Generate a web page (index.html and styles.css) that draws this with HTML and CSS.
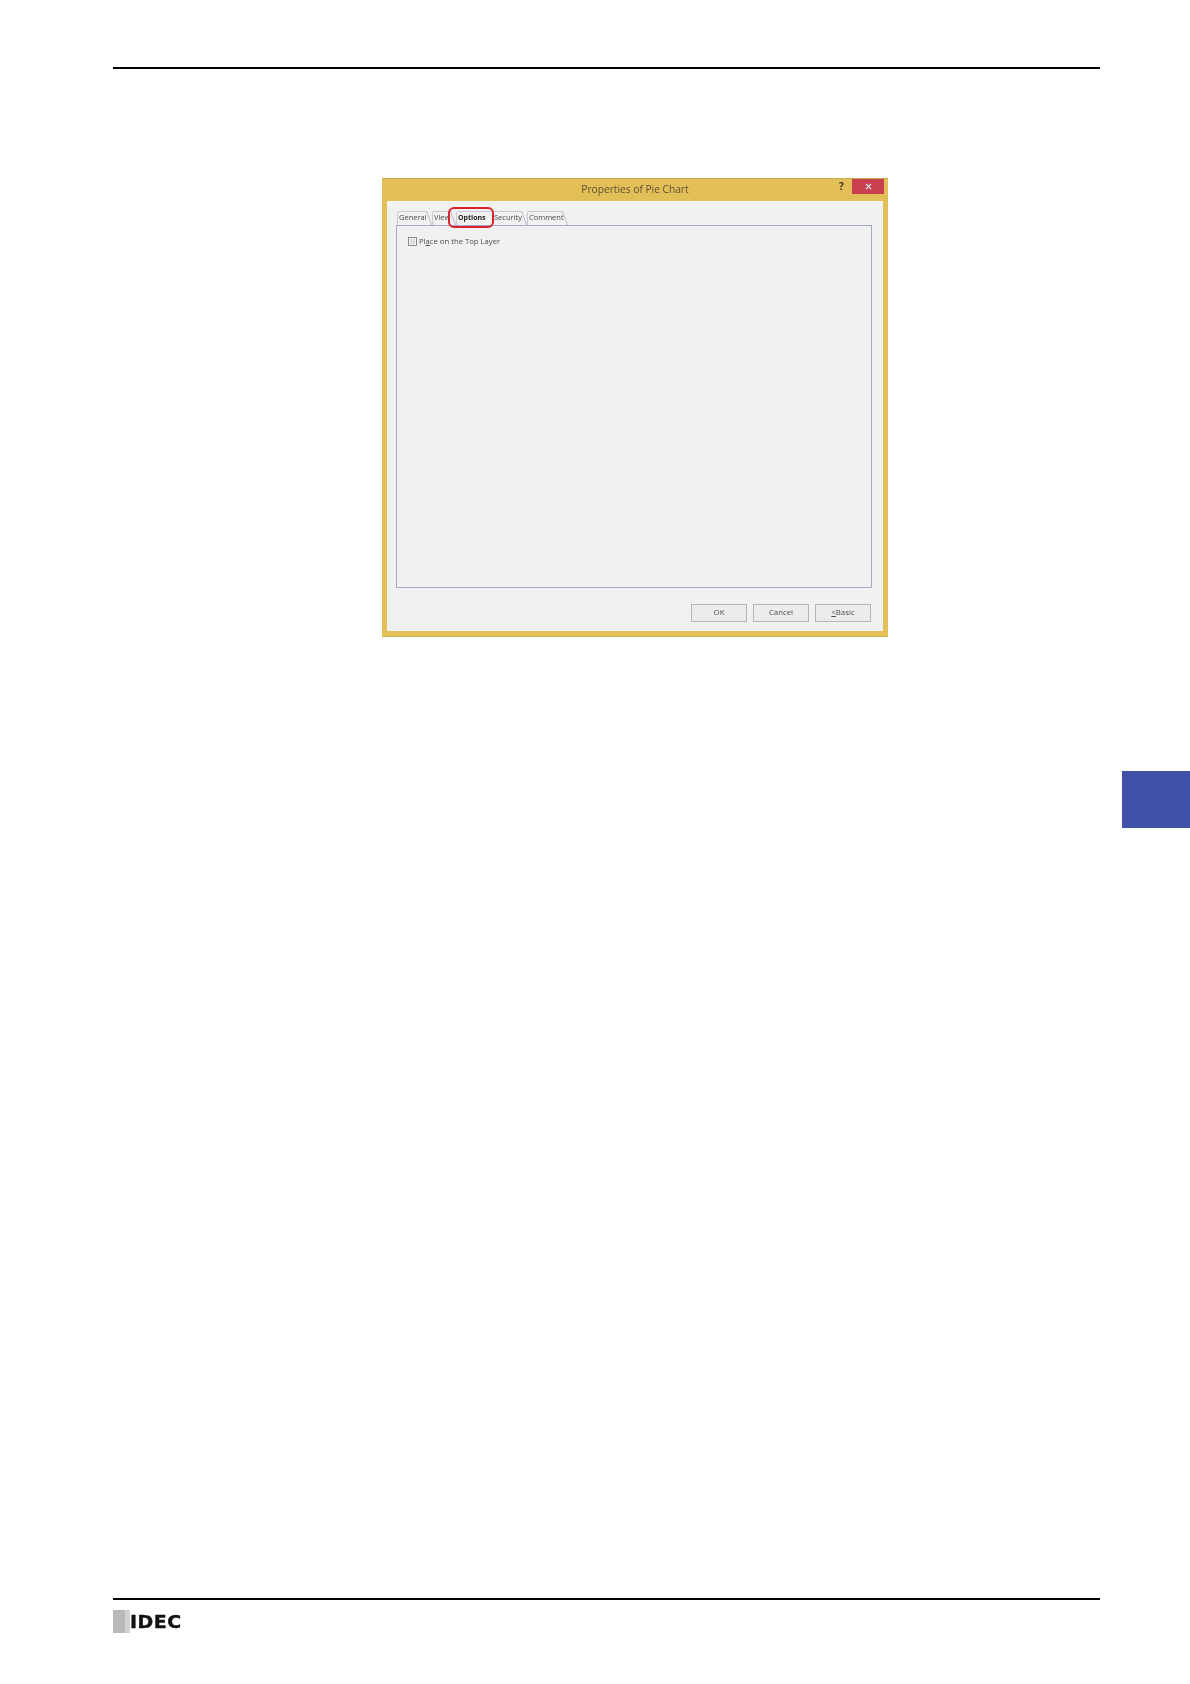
FILE: index.html
```html
<!DOCTYPE html>
<html lang="en">
<head>
<meta charset="utf-8">
<title>Properties of Pie Chart</title>
<link rel="stylesheet" href="styles.css">
</head>
<body>
<div class="page">
  <header class="top-rule"></header>
  <main class="content">
    <section class="dialog">
      <div class="titlebar">
        <span class="title">Properties of Pie Chart</span>
        <span class="help">?</span>
        <span class="close">
          <svg width="7" height="7" viewBox="0 0 8 8"><path d="M1 1L7 7M7 1L1 7" stroke="#fff" stroke-width="1.2" fill="none"/></svg>
        </span>
      </div>
      <div class="client">
        <div class="tabs">
          <span class="tab tab-general">General</span>
          <span class="tab tab-view">View</span>
          <span class="tab tab-options">Options<i class="highlight"></i></span>
          <span class="tab tab-security">Security</span>
          <span class="tab tab-comment">Comment</span>
        </div>
        <div class="panel">
          <label class="check"><span class="box"></span><span>Pl<u>a</u>ce on the Top Layer</span></label>
        </div>
        <div class="buttons">
          <span class="btn">OK</span>
          <span class="btn">Cancel</span>
          <span class="btn"><u>&lt;</u> Basic</span>
        </div>
      </div>
    </section>
  </main>
  <aside class="side-tab"></aside>
  <footer class="footer">
    <div class="logo"><span class="logo-mark"></span><span class="logo-text">IDEC</span></div>
  </footer>
</div>
</body>
</html>
```
FILE: styles.css
```css
* { box-sizing: border-box; }
html, body { margin: 0; padding: 0; background: #fff; }
.page {
  position: relative;
  width: 1190px;
  height: 1684px;
  display: flex;
  flex-direction: column;
  font-family: "Open Sans", "Noto Sans", sans-serif;
}
.top-rule {
  height: 2px;
  margin: 67px 90px 0 113px;
  background: #000;
}
.content {
  padding-top: 109px;
  padding-left: 382px;
}
.dialog {
  width: 506px;
  height: 459px;
  background: #e3bf58;
  padding: 0 5px 5px;
  display: flex;
  flex-direction: column;
  border-top: 1px solid #c9a94e;
  border-bottom: 1px solid #d4b257;
  filter: blur(0.3px);
}
.titlebar {
  height: 22px;
  position: relative;
  display: flex;
  align-items: center;
  justify-content: center;
}
.title {
  font-size: 10.2px;
  color: #5e5034;
  margin-top: -2px;
  margin-left: 0;
}
.help {
  position: absolute;
  left: 452px;
  top: 0;
  font-size: 10px;
  font-weight: 700;
  color: #3a3426;
}
.close {
  position: absolute;
  right: -1px;
  top: 0;
  width: 32px;
  height: 15px;
  background: #c8404f;
  display: flex;
  align-items: center;
  justify-content: center;
}
.client {
  flex: 1;
  background: #f1f1f1;
  padding: 9px 11px 0 9px;
  display: flex;
  flex-direction: column;
  border-top: 1px solid #f8f8f8;
}
.tabs {
  display: flex;
  height: 14px;
  position: relative;
  padding-left: 1px;
}
.tab {
  position: relative;
  display: block;
  height: 14px;
  line-height: 13px;
  font-size: 7.5px;
  color: #4a4a4a;
  border-left: 1px solid #c6cad4;
  border-top-left-radius: 2px;
  padding-left: 1px;
  white-space: nowrap;
}
.tab::before {
  content: "";
  position: absolute;
  left: 0;
  right: 5px;
  top: 0;
  height: 1px;
  background: #c6cad4;
}
.tab::after {
  content: "";
  position: absolute;
  right: 5px;
  top: 0;
  width: 1px;
  height: 14px;
  background: #bcc0ca;
  transform: skewX(20deg);
  transform-origin: top right;
}
.tab-general { width: 35px; }
.tab-view { width: 24px; }
.tab-options {
  width: 36px;
  font-size: 7px;
  font-weight: 700;
  color: #222;
  padding-left: 1px;
}
.tab-options::before { right: 0; }
.tab-options::after { display: none; }
.tab-security { width: 35px; }
.tab-comment { width: 41px; }
.highlight {
  position: absolute;
  left: -9px;
  top: -4px;
  width: 46px;
  height: 21px;
  border: 2px solid #d8232e;
  border-radius: 6px;
  z-index: 1;
}
.panel {
  width: 476px;
  height: 363px;
  background: #f1f1f1;
  border: 1px solid #a4abc6;
  padding: 10px 11px 0 11px;
}
.check {
  display: flex;
  align-items: center;
  gap: 2px;
  font-size: 7.7px;
  color: #4c4c4c;
  height: 10px;
}
.box {
  width: 9px;
  height: 9px;
  border: 1px solid #8a8a8a;
  background: #dcdcdc;
  box-shadow: inset 0 0 0 1px #f4f4f4;
}
.buttons {
  display: flex;
  justify-content: flex-end;
  gap: 6px;
  padding-top: 16px;
  width: 475px;
}
.btn {
  width: 56px;
  height: 18px;
  background: #ececec;
  border: 1px solid #b4b4b4;
  font-size: 7.8px;
  line-height: 14px;
  padding-bottom: 2px;
  color: #4c4c4c;
  display: flex;
  align-items: center;
  justify-content: center;
}
.side-tab {
  position: absolute;
  right: 0;
  top: 771px;
  width: 68px;
  height: 57px;
  background: #3f51a8;
}
.footer {
  margin-top: auto;
  margin-left: 113px;
  margin-right: 90px;
  height: 86px;
  border-top: 2px solid #000;
  padding-top: 10px;
}
.logo {
  display: flex;
  align-items: center;
  height: 23px;
}
.logo-mark {
  width: 17px;
  height: 23px;
  background: linear-gradient(90deg, #b9b9b9 0 12px, #d2d2d2 12px);
}
.logo-text {
  font-family: "DejaVu Sans", sans-serif;
  font-weight: 700;
  font-size: 18px;
  line-height: 23px;
  letter-spacing: 0.5px;
  color: #111;
  transform: scaleX(1.05);
  transform-origin: left center;
  -webkit-text-stroke: 0.4px #111;
}
```
